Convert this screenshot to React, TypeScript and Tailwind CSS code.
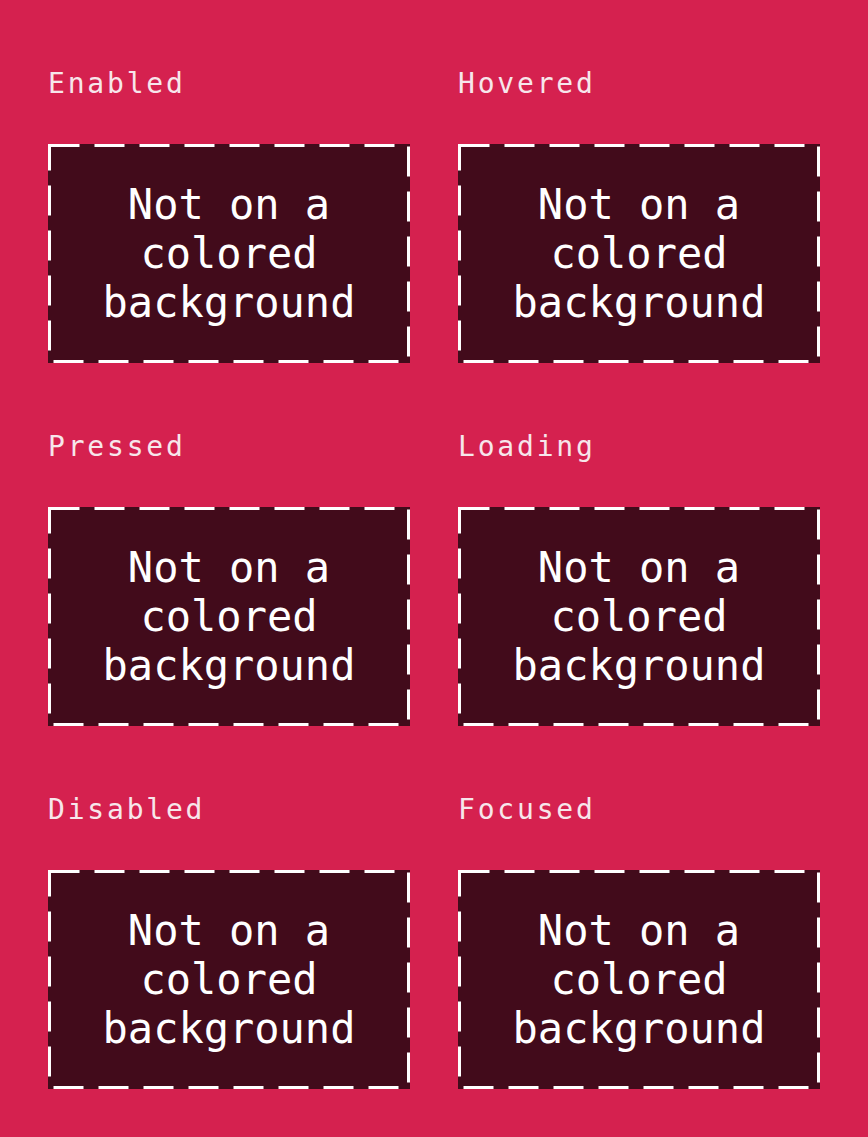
const states = ["Enabled", "Hovered", "Pressed", "Loading", "Disabled", "Focused"];

function DashedFrame() {
  return (
    <svg className="pointer-events-none absolute inset-0 h-full w-full" aria-hidden="true">
      <rect
        x="1.5"
        y="1.5"
        fill="none"
        stroke="#ffffff"
        strokeWidth="3"
        strokeDasharray="30 15"
        style={{ width: "calc(100% - 3px)", height: "calc(100% - 3px)" }}
      />
    </svg>
  );
}

function StateCell({ label }: { label: string }) {
  return (
    <div className="flex flex-col">
      <p className="h-8 text-[28px] leading-8 tracking-[2.8px] text-[#f7e6eb]">{label}</p>
      <div className="relative mt-11 flex h-[219px] items-center justify-center bg-[#420b1b] px-4">
        <DashedFrame />
        <p className="text-center text-[42px] leading-[49px] text-white">Not on a colored background</p>
      </div>
    </div>
  );
}

export default function App() {
  return (
    <div
      className="min-h-[1137px] w-full bg-[#d5214f] px-12 pt-[68px] pb-12"
      style={{ fontFamily: '"DejaVu Sans Mono", "Liberation Mono", monospace' }}
    >
      <div className="grid grid-cols-2 gap-x-12 gap-y-[68px]">
        {states.map((s) => (
          <StateCell key={s} label={s} />
        ))}
      </div>
    </div>
  );
}
